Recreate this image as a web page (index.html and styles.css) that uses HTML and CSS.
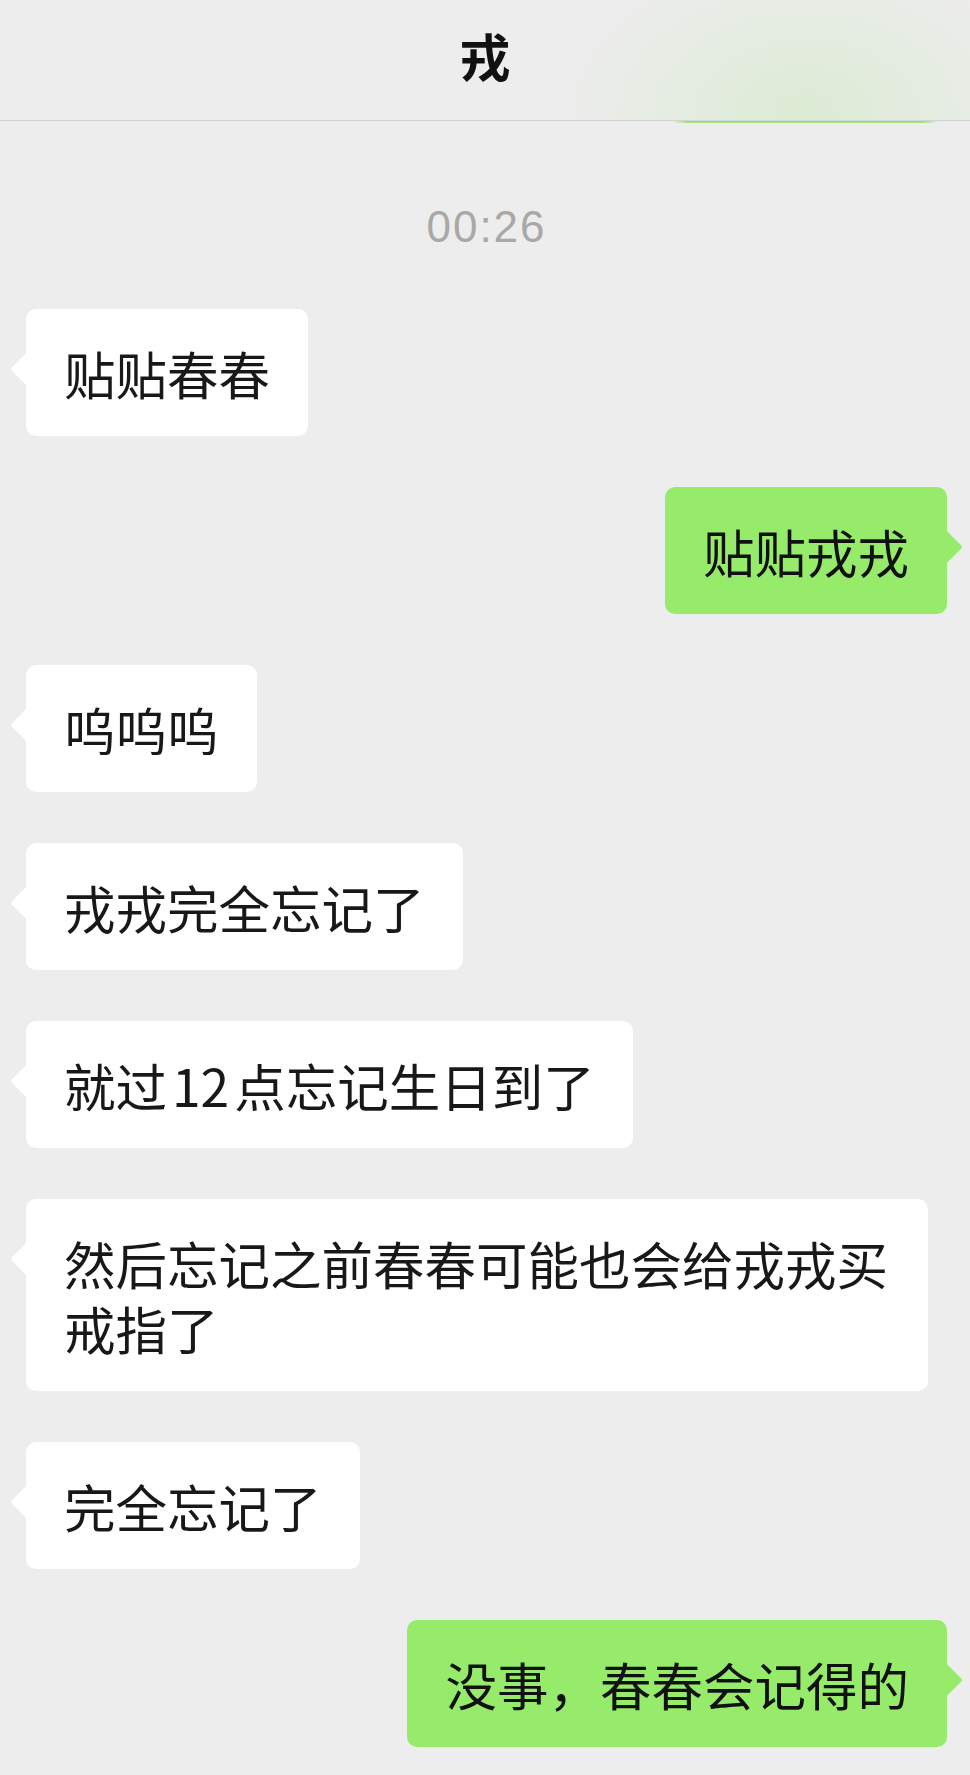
FILE: index.html
```html
<!DOCTYPE html>
<html lang="zh-CN">
<head>
    <meta charset="UTF-8">
    <meta name="viewport" content="width=device-width, initial-scale=1.0">
    <title>戎</title>
    <link rel="stylesheet" href="styles.css">
</head>
<body>
    <header class="nav">
        <span class="nav-title">戎</span>
    </header>

    <main class="chat">
        <div class="time">00:26</div>

        <div class="msg msg-in"><div class="bubble">贴贴春春</div></div>
        <div class="msg msg-out"><div class="bubble">贴贴戎戎</div></div>
        <div class="msg msg-in"><div class="bubble">呜呜呜</div></div>
        <div class="msg msg-in"><div class="bubble">戎戎完全忘记了</div></div>
        <div class="msg msg-in"><div class="bubble">就过<span class="num">12</span>点忘记生日到了</div></div>
        <div class="msg msg-in"><div class="bubble">然后忘记之前春春可能也会给戎戎买戒指了</div></div>
        <div class="msg msg-in"><div class="bubble">完全忘记了</div></div>
        <div class="msg msg-out"><div class="bubble">没事，春春会记得的</div></div>
    </main>
</body>
</html>
```

FILE: styles.css
```css
body {
    margin: 0;
    background-color: #ededed;
    font-family: "Noto Sans CJK SC", "Noto Sans", sans-serif;
}

/* barra de navegação */
.nav {
    position: relative;
    height: 110px;
    padding-bottom: 10px;
    display: flex;
    align-items: center;
    justify-content: center;
    border-bottom: 1px solid #d2d2d2;
    background:
        radial-gradient(ellipse 250px 165px at 805px 112px, #dcebd4 0%, rgba(237, 237, 237, 0) 100%),
        #ededed;
}

/* borda de uma bolha verde que passou por baixo da barra */
.nav::after {
    content: "";
    position: absolute;
    top: calc(100% + 1px);
    left: 672px;
    width: 267px;
    height: 2px;
    background: linear-gradient(to right, rgba(155, 226, 119, 0), #9ee27c 6%, #9ee27c 94%, rgba(155, 226, 119, 0));
    z-index: 2;
}

.nav-title {
    font-size: 51px;
    font-weight: 700;
    color: #111;
}

.chat {
    display: flex;
    flex-direction: column;
    gap: 51px;
    padding: 0 23px 40px 26px;
}

.time {
    margin: 81px 0 6px;
    text-align: center;
    font-family: "Liberation Sans", Arial, sans-serif;
    font-size: 44px;
    line-height: 50px;
    letter-spacing: 2px;
    color: #a8a8a8;
}

.msg {
    display: flex;
}

.msg-in {
    justify-content: flex-start;
}

.msg-out {
    justify-content: flex-end;
}

.bubble {
    position: relative;
    box-sizing: border-box;
    max-width: 902px;
    padding: 31px 38px 31px;
    font-size: 51.5px;
    line-height: 65px;
    color: #181818;
    background-color: #ffffff;
    border-radius: 10px;
}

/* números entre caracteres chineses ficam com um respiro curto */
.num {
    margin: 0 5px;
}

.msg-out .bubble {
    background-color: #96ec6a;
    color: #111;
}

/* rabinho da bolha */
.bubble::before {
    content: "";
    position: absolute;
    top: 48px;
    width: 24px;
    height: 24px;
    background-color: inherit;
    border-radius: 3px;
    transform: rotate(45deg);
}

.msg-in .bubble::before {
    left: -11px;
}

.msg-out .bubble::before {
    right: -11px;
}
```
